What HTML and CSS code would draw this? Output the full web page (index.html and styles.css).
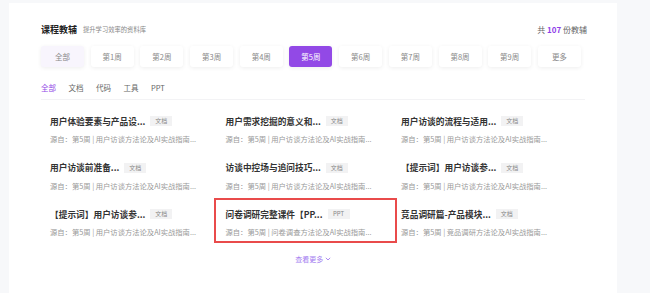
FILE: index.html
```html
<!DOCTYPE html>
<html lang="zh-CN">

<head>
    <meta charset="UTF-8">
    <meta name="viewport" content="width=device-width, initial-scale=1.0">
    <title>课程教辅</title>
    <link rel="stylesheet" href="styles.css">
</head>

<body>
    <div class="panel">
        <div class="header">
            <div class="title-group">
                <h1 class="title">课程教辅</h1>
                <span class="subtitle">提升学习效率的资料库</span>
            </div>
            <div class="total">共 <b>107</b> 份教辅</div>
        </div>

        <div class="weeks">
            <button class="week all">全部</button>
            <button class="week">第1周</button>
            <button class="week">第2周</button>
            <button class="week">第3周</button>
            <button class="week">第4周</button>
            <button class="week active">第5周</button>
            <button class="week">第6周</button>
            <button class="week">第7周</button>
            <button class="week">第8周</button>
            <button class="week">第9周</button>
            <button class="week">更多</button>
        </div>

        <div class="types">
            <span class="type active">全部</span>
            <span class="type">文档</span>
            <span class="type">代码</span>
            <span class="type">工具</span>
            <span class="type">PPT</span>
        </div>

        <div class="grid">
            <div class="card">
                <div class="card-title"><span>用户体验要素与产品设...</span><em class="tag">文档</em></div>
                <div class="card-from">源自：第5周 | 用户访谈方法论及AI实战指南...</div>
            </div>
            <div class="card">
                <div class="card-title"><span>用户需求挖掘的意义和...</span><em class="tag">文档</em></div>
                <div class="card-from">源自：第5周 | 用户访谈方法论及AI实战指南...</div>
            </div>
            <div class="card">
                <div class="card-title"><span>用户访谈的流程与适用...</span><em class="tag">文档</em></div>
                <div class="card-from">源自：第5周 | 用户访谈方法论及AI实战指南...</div>
            </div>
            <div class="card">
                <div class="card-title"><span>用户访谈前准备...</span><em class="tag">文档</em></div>
                <div class="card-from">源自：第5周 | 用户访谈方法论及AI实战指南...</div>
            </div>
            <div class="card">
                <div class="card-title"><span>访谈中控场与追问技巧...</span><em class="tag">文档</em></div>
                <div class="card-from">源自：第5周 | 用户访谈方法论及AI实战指南...</div>
            </div>
            <div class="card">
                <div class="card-title"><span>【提示词】用户访谈参...</span><em class="tag">文档</em></div>
                <div class="card-from">源自：第5周 | 用户访谈方法论及AI实战指南...</div>
            </div>
            <div class="card">
                <div class="card-title"><span>【提示词】用户访谈参...</span><em class="tag">文档</em></div>
                <div class="card-from">源自：第5周 | 用户访谈方法论及AI实战指南...</div>
            </div>
            <div class="card marked">
                <div class="card-title"><span>问卷调研完整课件【PP...</span><em class="tag">PPT</em></div>
                <div class="card-from">源自：第5周 | 问卷调查方法论及AI实战指南...</div>
            </div>
            <div class="card">
                <div class="card-title"><span>竞品调研篇-产品模块...</span><em class="tag">文档</em></div>
                <div class="card-from">源自：第5周 | 竞品调研方法论及AI实战指南...</div>
            </div>
        </div>

        <div class="more">
            <a href="#">查看更多
                <svg width="6" height="4" viewBox="0 0 6 4"><path d="M0.8 0.8 L3 3 L5.2 0.8" fill="none" stroke="currentColor" stroke-width="0.9"/></svg>
            </a>
        </div>
    </div>
</body>

</html>
```

FILE: styles.css
```css
body {
    margin: 0;
    height: 293px;
    overflow: hidden;
    background-color: #f7f8fa;
    font-family: "Noto Sans CJK SC", "Noto Sans", sans-serif;
}

.panel {
    margin: 3px 0 0 9px;
    width: 608px;
    height: 290px;
    box-sizing: border-box;
    padding: 17px 32px 0 32px;
    background: #fff;
}

.header {
    display: flex;
    justify-content: space-between;
    align-items: center;
    height: 18px;
}

.title-group {
    display: flex;
    align-items: center;
    gap: 6px;
}

.title {
    margin: 0;
    font-size: 9px;
    font-weight: bold;
    color: #222;
}

.subtitle {
    font-size: 6.3px;
    color: #888;
}

.total {
    margin-right: -2px;
    font-size: 8px;
    color: #666;
}

.total b {
    color: #8f3fe8;
}

.weeks {
    display: flex;
    gap: 6.7px;
    margin-top: 8px;
}

.week {
    width: 43px;
    height: 21px;
    padding: 0;
    border: none;
    border-radius: 3px;
    background: #fff;
    box-shadow: 0 1px 4px rgba(0, 0, 0, 0.07);
    font-family: inherit;
    font-size: 7.5px;
    color: #888;
}

.week.all {
    background: #f8f5fd;
}

.week.active {
    background: #9249e6;
    color: #fff;
}

.types {
    display: flex;
    gap: 12.5px;
    margin-top: 15px;
    padding-bottom: 5px;
    line-height: 12px;
    border-bottom: 1px solid #f3f3f5;
    font-size: 7.5px;
    color: #666;
}

.type.active {
    color: #9249e6;
}

.grid {
    display: grid;
    grid-template-columns: repeat(3, 175.5px);
    row-gap: 1.7px;
    padding-top: 7px;
}

.card {
    position: relative;
    height: 45px;
    padding: 7px 9px;
    box-sizing: border-box;
}

.card.marked::after {
    content: "";
    position: absolute;
    left: -3px;
    top: -2px;
    width: 183px;
    height: 45px;
    box-sizing: border-box;
    border: 2px solid #e94b4b;
}

.card-title {
    display: flex;
    align-items: center;
    gap: 5px;
    height: 14px;
    white-space: nowrap;
    font-size: 8.7px;
    font-weight: bold;
    color: #333;
}

.tag {
    width: 22px;
    height: 10px;
    line-height: 10px;
    text-align: center;
    font-style: normal;
    font-weight: normal;
    font-size: 6px;
    color: #888;
    background: #f2f2f3;
}

.card-from {
    margin-top: 5px;
    height: 12px;
    line-height: 12px;
    white-space: nowrap;
    font-size: 7.3px;
    color: #999;
}

.more {
    margin-top: 9px;
    text-align: center;
    font-size: 7px;
}

.more a {
    color: #a47df0;
    text-decoration: none;
}

.more svg {
    vertical-align: 1px;
}
```
